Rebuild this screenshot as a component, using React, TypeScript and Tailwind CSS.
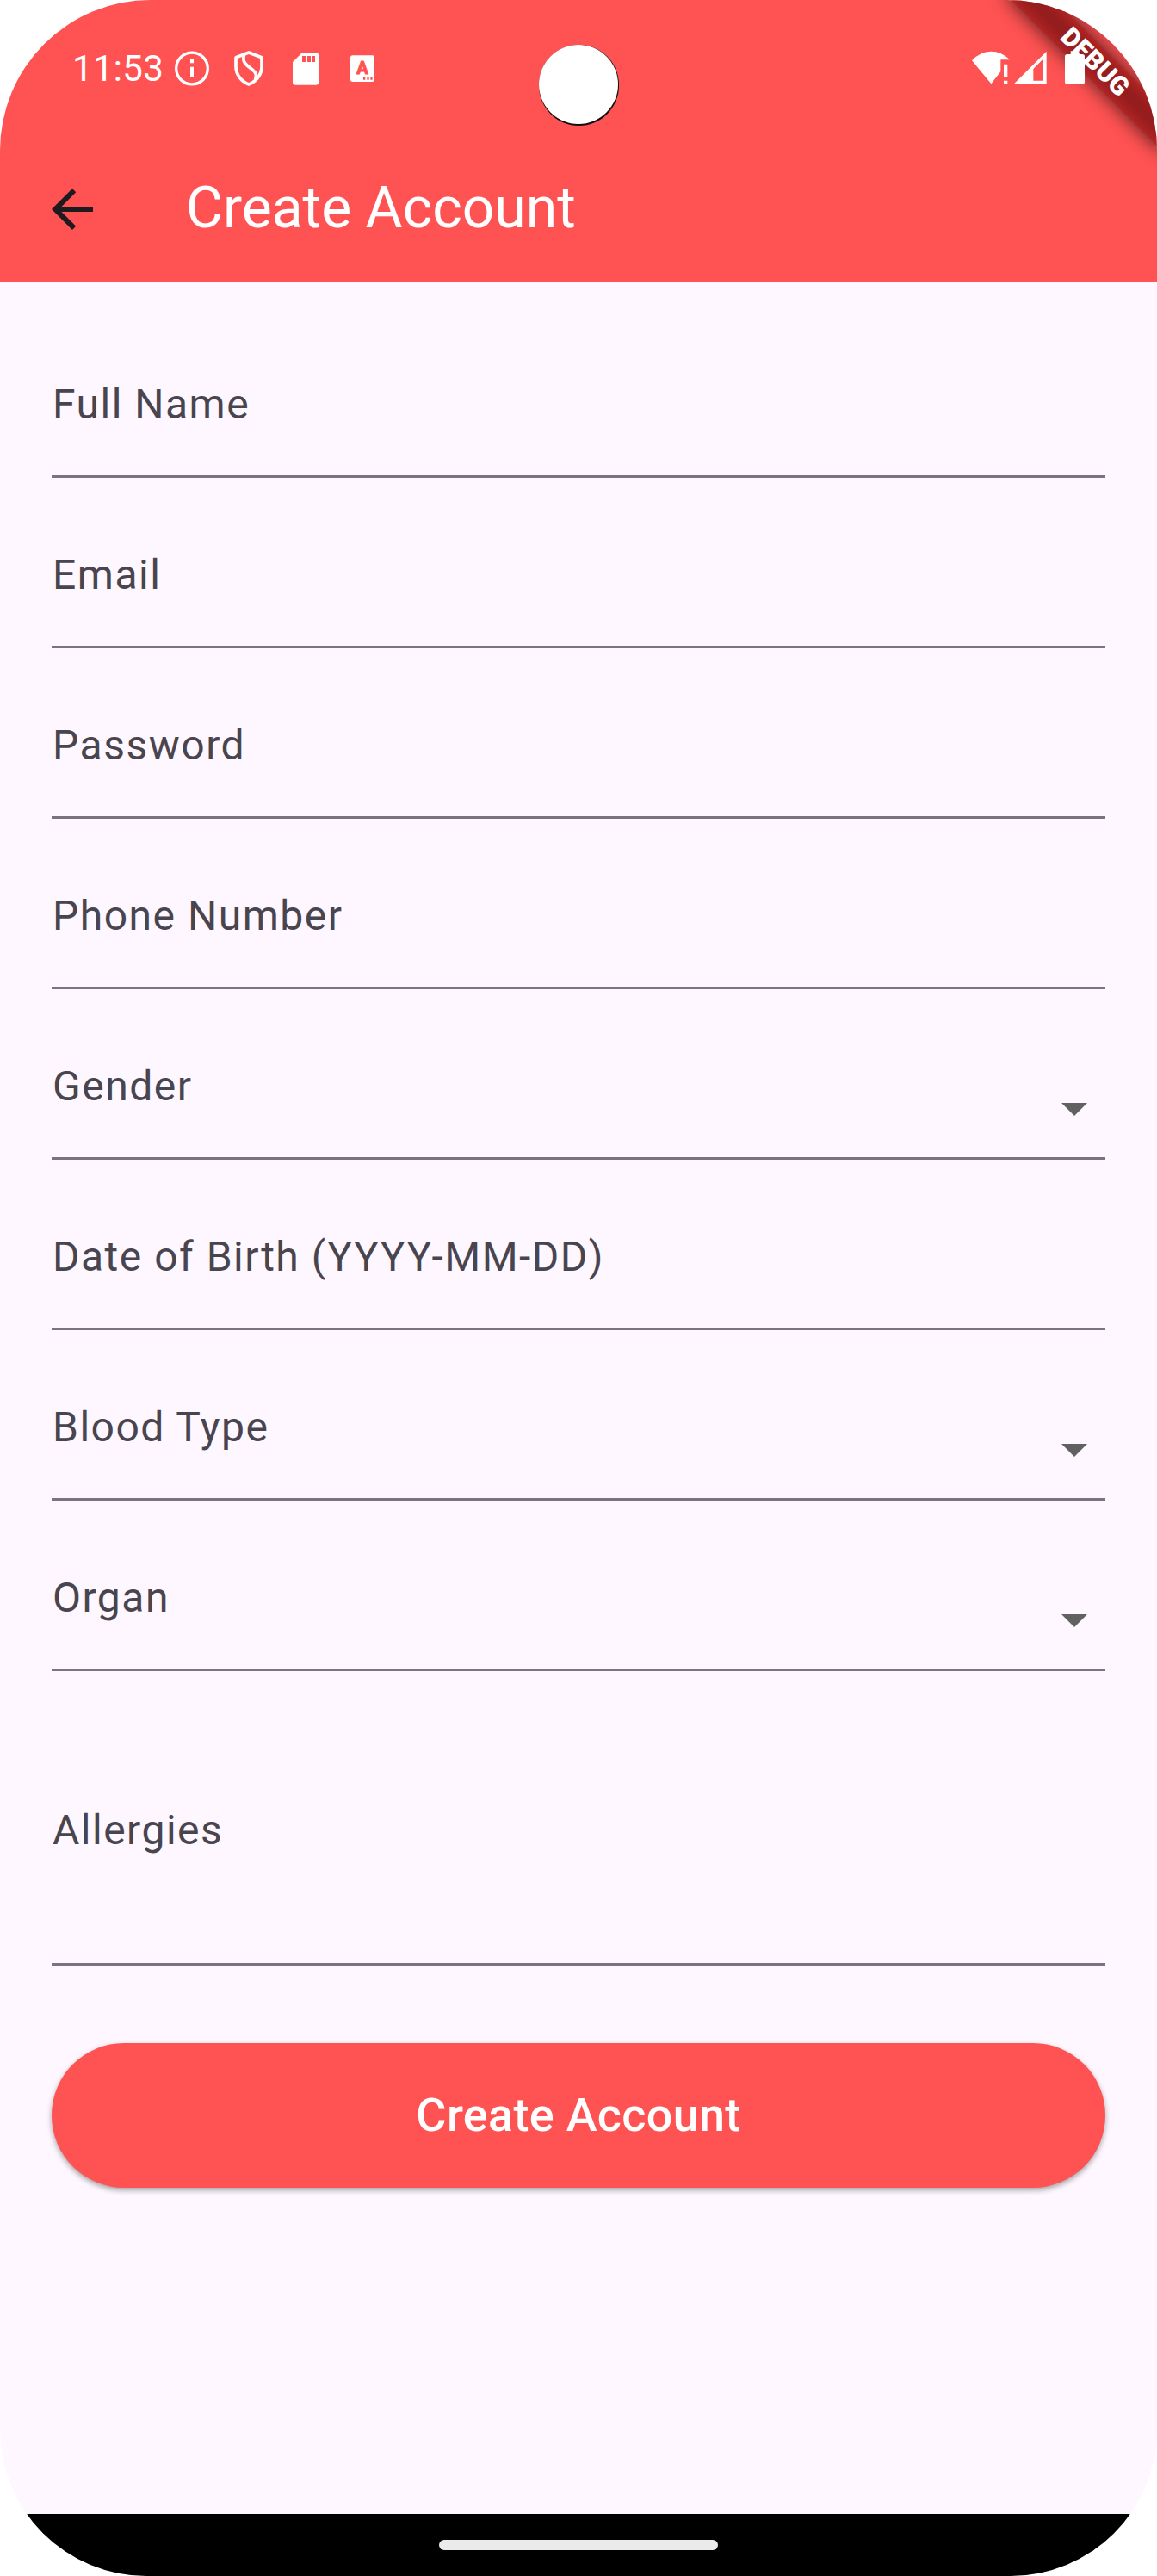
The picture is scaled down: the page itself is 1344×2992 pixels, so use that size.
import React from "react";

type Field = { label: string; dropdown?: boolean; tall?: boolean };

const fields: Field[] = [
  { label: "Full Name" },
  { label: "Email" },
  { label: "Password" },
  { label: "Phone Number" },
  { label: "Gender", dropdown: true },
  { label: "Date of Birth (YYYY-MM-DD)" },
  { label: "Blood Type", dropdown: true },
  { label: "Organ", dropdown: true },
  { label: "Allergies", tall: true },
];

function StatusBar() {
  return (
    <div className="flex h-[159px] items-start justify-between pr-[84px] pl-[84px] text-white">
      <div className="flex items-start pt-[59px]">
        <span className="h-[41px] w-[119px] text-[42px] leading-[41px] tracking-[0.300px] whitespace-nowrap">11:53</span>
        <svg className="h-[41px] w-[40px]" viewBox="609 177 120 123" fill="none">
          <circle cx="669" cy="238.500" r="55" stroke="white" strokeWidth="10" />
          <path d="M663 207h12v13h-12zM663 233h12v37h-12z" fill="white" />
        </svg>
        <svg className="ml-[29px] h-[41px] w-[34px]" viewBox="816 177 102 123" fill="none">
          <path
            d="M867 183L912 200V232C912 261 892 285 867 294C842 285 822 261 822 232V200Z"
            stroke="white"
            strokeWidth="11"
            strokeLinejoin="round"
          />
          <path
            d="M851 190C846 204 848 217 861 228L882 245C894 254 896 264 889 278"
            stroke="white"
            strokeWidth="11"
          />
        </svg>
        <svg className="ml-[34px] h-[41px] w-[30px]" viewBox="1020 177 90 123">
          <path
            fill="white"
            fillRule="evenodd"
            d="M1053 183H1101Q1110 183 1110 192V287Q1110 296 1101 296H1029Q1020 296 1020 287V216ZM1053 195V216H1065V195ZM1071 195V216H1083V195ZM1087 195V216H1098V195Z"
          />
        </svg>
        <svg className="ml-[37px] h-[41px] w-[28px]" viewBox="1221 177 84 123">
          <rect x="1221" y="193" width="84" height="92" rx="8" fill="white" />
          <text
            x="1263"
            y="259"
            textAnchor="middle"
            className="fill-[#ff5252] stroke-[#ff5252] font-[Roboto] text-[60px] font-bold"
            strokeWidth="3"
            strokeLinejoin="round"
          >
            A
          </text>
          <path d="M1266 270h7v8h-7zM1279 270h7v8h-7zM1291 270h7v8h-7z" fill="#ff5252" />
        </svg>
      </div>
      <div className="relative z-20 flex items-start pt-[59px]">
        <svg className="h-[41px] w-[44px]" viewBox="147 177 132 123" fill="white">
          <path d="M147 211Q175 179 213 179Q251 179 279 208H247V250L214 292Z" />
          <path d="M258 224h13v46h-13zM258 281h13v12h-13z" />
        </svg>
        <svg className="ml-[5px] h-[41px] w-[38px]" viewBox="294 177 114 123" fill="white">
          <path fillRule="evenodd" d="M294 292L407 179V292ZM361 240V281H396V205Z" />
        </svg>
        <svg className="ml-[21px] h-[41px] w-[23px]" viewBox="471 177 69 123" fill="white">
          <path d="M491 178H520V189H532Q540 189 540 197V285Q540 293 532 293H479Q471 293 471 285V197Q471 189 479 189H491Z" />
        </svg>
      </div>
    </div>
  );
}

function AppBar() {
  return (
    <div className="flex h-[168px] items-center pl-[48px]">
      <svg className="size-[72px]" viewBox="0 0 24 24" fill="#1d1b20">
        <path d="M20 11H7.830l5.590-5.590L12 4l-8 8 8 8 1.410-1.410L7.830 13H20v-2z" />
      </svg>
      <h1 className="ml-[96px] pb-[3px] text-[66px] leading-[84px] font-normal whitespace-nowrap text-white">
        Create Account
      </h1>
    </div>
  );
}

function DebugBanner() {
  return (
    <div className="absolute top-[54.100px] left-[1151.900px] z-10 h-[36px] w-[240px] rotate-45">
      <div className="absolute -inset-x-2 inset-y-0 bg-black/70 blur-[11px]" />
      <div className="absolute inset-0 bg-[#b71c1c]/63" />
      <div className="relative text-center text-[30.600px] leading-[36px] font-black text-white">DEBUG</div>
    </div>
  );
}

function CameraHole() {
  return (
    <div className="absolute top-[52px] left-[625.500px] h-[94px] w-[93px] rounded-full bg-[#101010]">
      <div className="mx-auto h-[92px] w-[92px] rounded-full bg-white" />
    </div>
  );
}

function FormField({ label, dropdown, tall }: Field) {
  return (
    <div
      className={
        tall
          ? "flex h-[312px] items-center justify-between border-b-[3px] border-[#79747e]"
          : "flex h-[168px] items-center justify-between border-b-[3px] border-[#79747e]"
      }
    >
      <label className="pl-px text-[48px] leading-[72px] tracking-[1.500px] whitespace-nowrap text-[#49454f]">
        {label}
      </label>
      {dropdown && (
        <svg className="mt-[51px] size-[72px]" viewBox="0 0 24 24" fill="#616161">
          <path d="M7 10l5 5 5-5z" />
        </svg>
      )}
    </div>
  );
}

export default function App() {
  return (
    <div className="h-[2992px] w-[1344px] bg-white font-[Roboto,sans-serif]">
      <div className="relative flex h-full flex-col overflow-hidden rounded-t-[175px] rounded-b-[170px] bg-[#fef7ff]">
        <header className="h-[327px] shrink-0 bg-[#ff5252]">
          <StatusBar />
          <AppBar />
        </header>
        <CameraHole />
        <DebugBanner />
        <main className="flex flex-1 flex-col px-[60px] pt-[60px]">
          <div className="flex flex-col gap-[30px]">
            {fields.map((f) => (
              <FormField key={f.label} {...f} />
            ))}
          </div>
          <button className="mt-[90px] h-[168px] shrink-0 rounded-full bg-[#ff5252] pb-[2px] text-[54px] font-medium tracking-[0.300px] text-white shadow-[0_3px_6px_rgba(0,0,0,0.35)]">
            Create Account
          </button>
        </main>
        <footer className="flex h-[72px] shrink-0 items-center justify-center bg-black">
          <div className="h-[12px] w-[324px] rounded-full bg-[#ebebeb]" />
        </footer>
      </div>
    </div>
  );
}
